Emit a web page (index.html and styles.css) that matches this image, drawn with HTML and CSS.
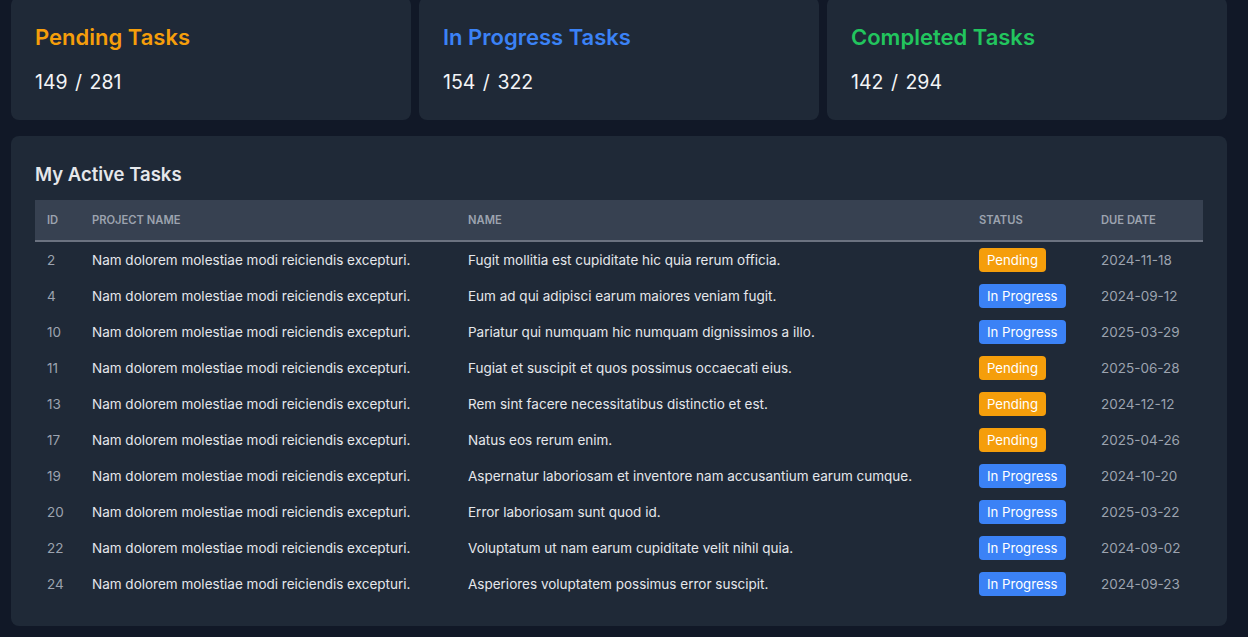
FILE: index.html
```html
<!DOCTYPE html>
<html lang="en">
<head>
<meta charset="utf-8">
<title>Dashboard</title>
<link rel="stylesheet" href="styles.css">
</head>
<body>
<main class="page">
  <section class="stats">
    <div class="card stat">
      <h3 class="stat-title amber">Pending Tasks</h3>
      <p class="stat-count">149 / 281</p>
    </div>
    <div class="card stat">
      <h3 class="stat-title blue">In Progress Tasks</h3>
      <p class="stat-count">154 / 322</p>
    </div>
    <div class="card stat">
      <h3 class="stat-title green">Completed Tasks</h3>
      <p class="stat-count">142 / 294</p>
    </div>
  </section>

  <section class="card tasks">
    <h2 class="tasks-title">My Active Tasks</h2>
    <table class="table">
      <colgroup>
        <col class="c-id"><col class="c-project"><col class="c-name"><col class="c-status"><col class="c-due">
      </colgroup>
      <thead>
        <tr>
          <th>ID</th><th>Project Name</th><th>Name</th><th>Status</th><th>Due Date</th>
        </tr>
      </thead>
      <tbody>
        <tr><td class="muted">2</td><td>Nam dolorem molestiae modi reiciendis excepturi.</td><td>Fugit mollitia est cupiditate hic quia rerum officia.</td><td><span class="badge pending">Pending</span></td><td class="muted">2024-11-18</td></tr>
        <tr><td class="muted">4</td><td>Nam dolorem molestiae modi reiciendis excepturi.</td><td>Eum ad qui adipisci earum maiores veniam fugit.</td><td><span class="badge progress">In Progress</span></td><td class="muted">2024-09-12</td></tr>
        <tr><td class="muted">10</td><td>Nam dolorem molestiae modi reiciendis excepturi.</td><td>Pariatur qui numquam hic numquam dignissimos a illo.</td><td><span class="badge progress">In Progress</span></td><td class="muted">2025-03-29</td></tr>
        <tr><td class="muted">11</td><td>Nam dolorem molestiae modi reiciendis excepturi.</td><td>Fugiat et suscipit et quos possimus occaecati eius.</td><td><span class="badge pending">Pending</span></td><td class="muted">2025-06-28</td></tr>
        <tr><td class="muted">13</td><td>Nam dolorem molestiae modi reiciendis excepturi.</td><td>Rem sint facere necessitatibus distinctio et est.</td><td><span class="badge pending">Pending</span></td><td class="muted">2024-12-12</td></tr>
        <tr><td class="muted">17</td><td>Nam dolorem molestiae modi reiciendis excepturi.</td><td>Natus eos rerum enim.</td><td><span class="badge pending">Pending</span></td><td class="muted">2025-04-26</td></tr>
        <tr><td class="muted">19</td><td>Nam dolorem molestiae modi reiciendis excepturi.</td><td>Aspernatur laboriosam et inventore nam accusantium earum cumque.</td><td><span class="badge progress">In Progress</span></td><td class="muted">2024-10-20</td></tr>
        <tr><td class="muted">20</td><td>Nam dolorem molestiae modi reiciendis excepturi.</td><td>Error laboriosam sunt quod id.</td><td><span class="badge progress">In Progress</span></td><td class="muted">2025-03-22</td></tr>
        <tr><td class="muted">22</td><td>Nam dolorem molestiae modi reiciendis excepturi.</td><td>Voluptatum ut nam earum cupiditate velit nihil quia.</td><td><span class="badge progress">In Progress</span></td><td class="muted">2024-09-02</td></tr>
        <tr><td class="muted">24</td><td>Nam dolorem molestiae modi reiciendis excepturi.</td><td>Asperiores voluptatem possimus error suscipit.</td><td><span class="badge progress">In Progress</span></td><td class="muted">2024-09-23</td></tr>
      </tbody>
    </table>
  </section>
</main>
</body>
</html>
```

FILE: styles.css
```css
* { box-sizing: border-box; }
html, body {
  margin: 0;
  padding: 0;
  background: #111827;
  font-family: Inter, "Noto Sans", "Liberation Sans", sans-serif;
  color: #e5e7eb;
  overflow: hidden;
}
.page {
  width: 1216px;
  margin: -3px 0 0 11px;
  display: flex;
  flex-direction: column;
  gap: 16px;
}
.stats {
  display: grid;
  grid-template-columns: repeat(3, 1fr);
  gap: 8px;
}
.card {
  background: #1f2937;
  border-radius: 8px;
  padding: 24px;
}
.stat-title {
  margin: 0;
  font-size: 22px;
  line-height: 32px;
  font-weight: 600;
}
.amber { color: #f59e0b; }
.blue { color: #3b82f6; }
.green { color: #22c55e; }
.stat-count {
  margin: 15px 0 0;
  font-size: 19.5px;
  line-height: 28px;
  word-spacing: 2px;
  color: #f3f4f6;
}
.tasks-title {
  margin: 0 0 12px;
  font-size: 18.5px;
  line-height: 28px;
  font-weight: 600;
  color: #e5e7eb;
}
.table {
  width: 100%;
  border-collapse: collapse;
  font-size: 13.5px;
}
.c-id { width: 45px; }
.c-project { width: 376px; }
.c-name { width: 511px; }
.c-status { width: 122px; }
.c-due { width: 114px; }
.table thead tr {
  background: #374151;
  border-bottom: 2px solid #6b7280;
}
.table th {
  text-align: left;
  padding: 12px;
  font-size: 11.2px;
  line-height: 16px;
  font-weight: 600;
  color: #9ca3af;
  text-transform: uppercase;
  white-space: nowrap;
}
.table td {
  padding: 8px 12px;
  height: 36px;
  line-height: 20px;
  white-space: nowrap;
  color: #e5e7eb;
}
.table td.muted { color: #9ca3af; }
.badge {
  display: inline-block;
  padding: 2px 8px;
  margin: -2px 0;
  border-radius: 4px;
  color: #fff;
  line-height: 20px;
  font-size: 13.2px;
}
.badge.pending { background: #f59e0b; }
.badge.progress { background: #3b82f6; }
```
